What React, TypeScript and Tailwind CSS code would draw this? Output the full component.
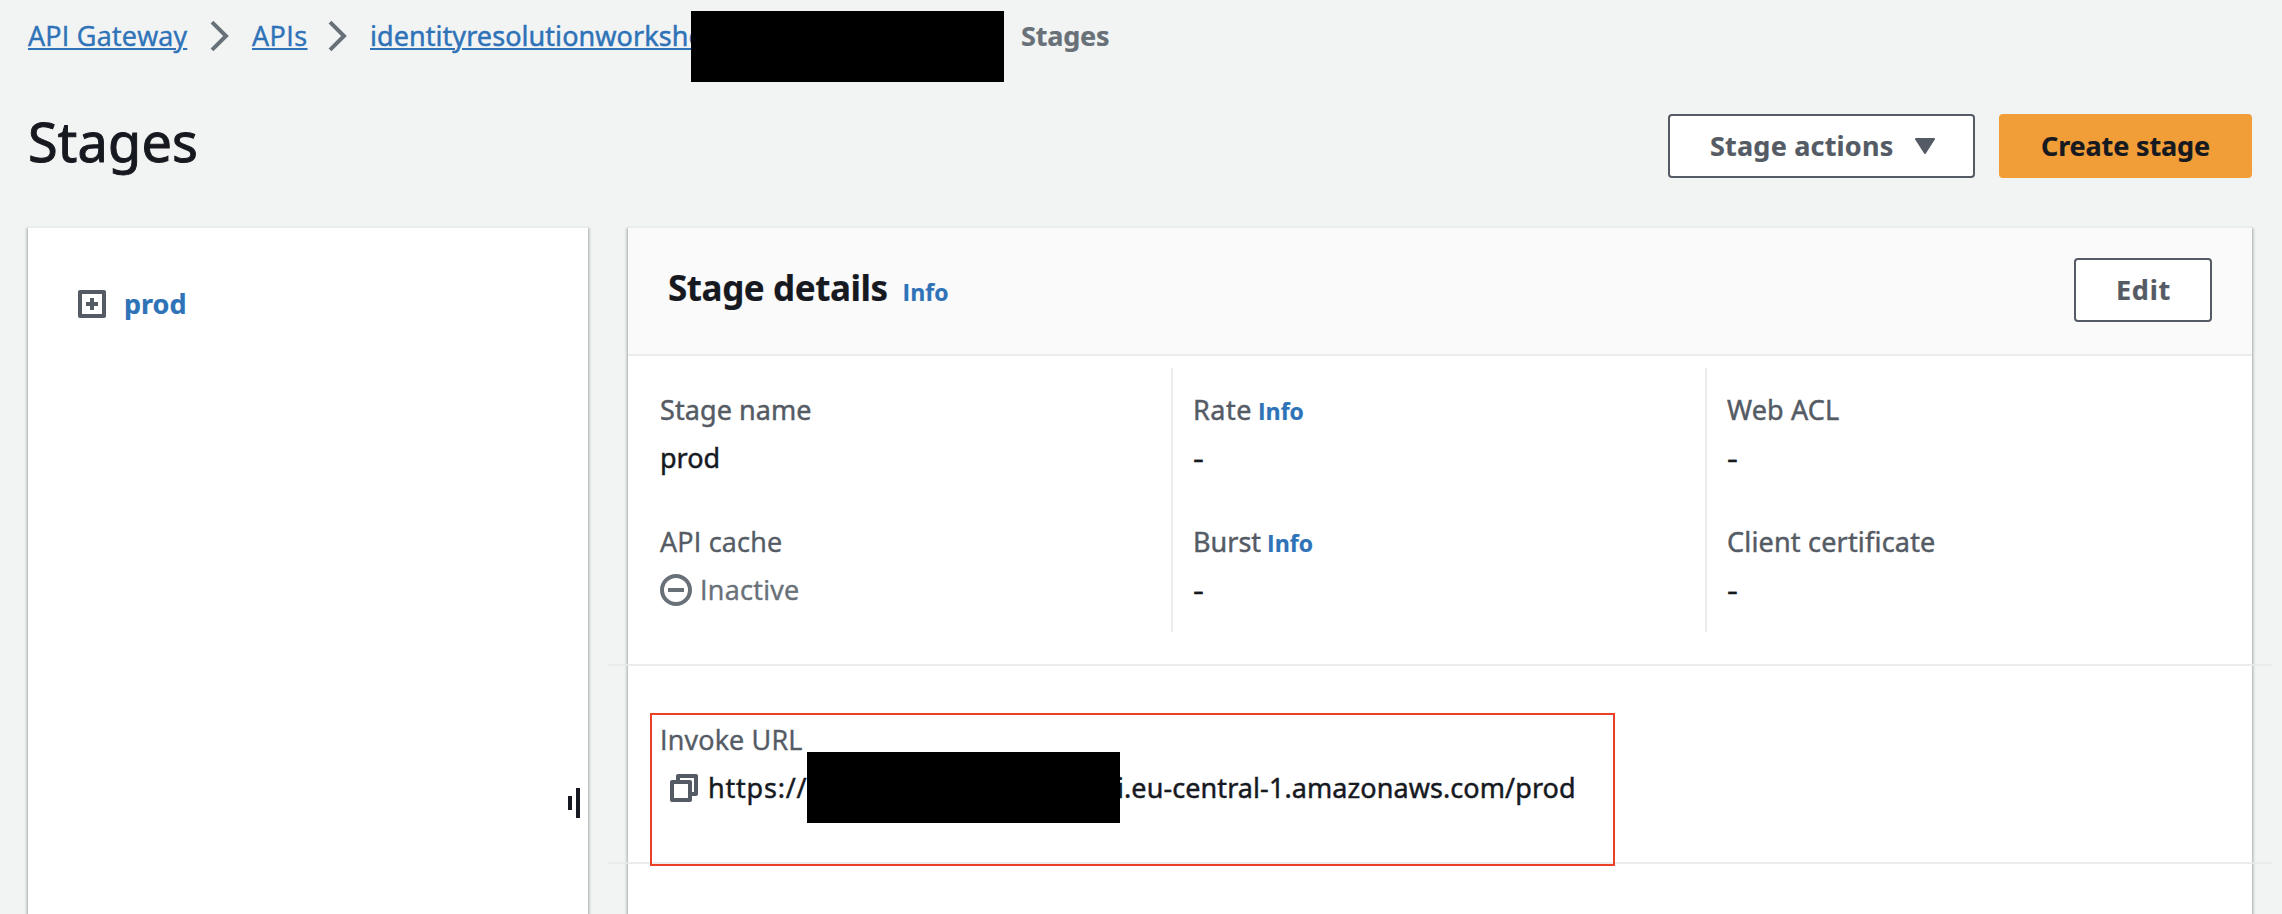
import type { ReactNode } from "react";

const NOTO = "font-['Noto_Sans','Open_Sans',sans-serif]";
const OPEN = "font-['Open_Sans','Noto_Sans',sans-serif]";
const BOLD = "font-bold [-webkit-text-stroke:0.2px]";

function Chevron() {
  return (
    <svg width="20" height="32" viewBox="0 0 20 32" fill="none" stroke="#687078" strokeWidth="4" className="-mt-px shrink-0">
      <path d="M2 2.2 L16 16 L2 29.8" />
    </svg>
  );
}

function Crumb({ className = "", children }: { className?: string; children: ReactNode }) {
  return (
    <a className={`shrink-0 text-[#2e72b8] underline decoration-2 underline-offset-[2px] ${className}`}>{children}</a>
  );
}

function Info({ className = "" }: { className?: string }) {
  return <a className={`${OPEN} ${BOLD} text-[23px] text-[#2e72b8] ${className}`}>Info</a>;
}

function Field({ label, children, className = "" }: { label: ReactNode; children: ReactNode; className?: string }) {
  return (
    <div className={`h-[132px] pt-[18px] leading-[48px] ${className}`}>
      <div className="h-12 text-[#545b64]">{label}</div>
      <div className="h-12">{children}</div>
    </div>
  );
}

function Dash() {
  return <span className="inline-block origin-left scale-x-[1.25]">-</span>;
}

function Redacted({ className = "" }: { className?: string }) {
  return <span className={`relative block h-[71px] w-[313px] shrink-0 bg-black ${className}`} />;
}

export default function App() {
  return (
    <div className={`${NOTO} relative h-[914px] w-[2282px] overflow-hidden bg-[#f2f4f3] text-[27px] leading-10 whitespace-nowrap text-[#16191f] [-webkit-text-stroke:0.45px]`}>
      <nav className="flex h-[114px] items-start pt-4 pl-7">
        <Crumb className={`${OPEN} w-[160px] tracking-[0.23px]`}>API Gateway</Crumb>
        <div className="mt-[5px] ml-[22px] w-[42px] shrink-0"><Chevron /></div>
        <Crumb className={`${OPEN} w-[55px] tracking-[0.45px]`}>APIs</Crumb>
        <div className="mt-[5px] ml-[21px] w-[41px] shrink-0"><Chevron /></div>
        <Crumb className="w-[322px] pl-px tracking-[0.06px]">identityresolutionworksho</Crumb>
        <Redacted className="-mt-[5px]" />
        <span className={`ml-[17px] tracking-[-0.19px] text-[#687078] ${BOLD}`}>Stages</span>
      </nav>

      <header className="flex h-28 items-start justify-between pr-[30px] pl-7">
        <h1 className="-mt-[5px] text-[54px] leading-[64px] tracking-[0.2px] [-webkit-text-stroke:1px]">Stages</h1>
        <div className={`flex gap-6 ${BOLD}`}>
          <button className="flex h-16 w-[307px] items-center rounded border-2 border-[#545b64] bg-white pl-10 text-[#545b64]">
            <span className="w-[205px] text-left tracking-[0.2px]">Stage actions</span>
            <svg width="20" height="18" viewBox="0 0 20 18" fill="#545b64" stroke="#545b64" strokeWidth="2" strokeLinejoin="round">
              <path d="M1 2 H19 L10 16 Z" />
            </svg>
          </button>
          <button className="h-16 w-[253px] rounded bg-[#f19e38] tracking-[-0.14px]">Create stage</button>
        </div>
      </header>

      <main className="flex gap-10 pl-7">
        <aside className="flex h-[720px] w-[560px] flex-col border-t-2 border-[#eaeded] bg-white shadow-[0_2px_2px_0_rgba(0,28,36,0.3),2px_2px_2px_0_rgba(0,28,36,0.15),-2px_2px_2px_0_rgba(0,28,36,0.15)]">
          <div className="flex h-[560px] items-start pt-14 pl-[50px]">
            <svg width="28" height="28" viewBox="0 0 28 28" fill="none" stroke="#545b64" strokeWidth="4" className="mt-[6px]">
              <rect x="2" y="2" width="24" height="24" strokeLinejoin="round" />
              <path d="M14 8 V20 M8 14 H20" />
            </svg>
            <a className={`ml-[18px] text-[#2e72b8] ${BOLD}`}>prod</a>
          </div>
          <div className="flex h-[30px] items-center justify-end gap-1 pr-2">
            <span className="h-[14px] w-1 bg-[#16191f]" />
            <span className="h-[30px] w-1 bg-[#16191f]" />
          </div>
        </aside>

        <section className="h-[720px] w-[1624px] border-t-2 border-[#eaeded] bg-white shadow-[0_2px_2px_0_rgba(0,28,36,0.3),2px_2px_2px_0_rgba(0,28,36,0.15),-2px_2px_2px_0_rgba(0,28,36,0.15)]">
          <div className="flex h-32 items-start justify-between border-b-2 border-[#eaeded] bg-[#fafafa] px-10 pt-[30px]">
            <div className="mt-[6px] flex items-baseline">
              <h2 className={`text-[35px] leading-[48px] tracking-[-0.43px] ${BOLD}`}>Stage details</h2>
              <Info className="ml-[15px]" />
            </div>
            <button className={`h-16 w-[138px] rounded border-2 border-[#545b64] bg-white pl-px tracking-[0.8px] text-[#545b64] ${BOLD}`}>Edit</button>
          </div>

          <div className="grid grid-cols-[543px_534px_547px] pt-3 pb-8">
            <div className="pl-8">
              <Field label={<span className="tracking-[0.08px]">Stage name</span>}>
                <span>prod</span>
              </Field>
              <Field label={<span className={`${OPEN} tracking-[0.21px]`}>API cache</span>}>
                <div className="flex items-center text-[#687078]">
                  <svg width="32" height="32" viewBox="0 0 32 32" fill="none" stroke="#687078" strokeWidth="4">
                    <circle cx="16" cy="16" r="14" />
                    <path d="M8 16 H24" />
                  </svg>
                  <span className={`${OPEN} ml-2 tracking-[0.3px]`}>Inactive</span>
                </div>
              </Field>
            </div>
            <div className="border-l-2 border-[#eaeded] pl-[20px]">
              <Field label={<><span className="tracking-[0.5px]">Rate</span><Info className="ml-[6px]" /></>}><Dash /></Field>
              <Field label={<>Burst<Info className="ml-[6px]" /></>}><Dash /></Field>
            </div>
            <div className="border-l-2 border-[#eaeded] pl-[20px]">
              <Field label={<span className="tracking-[0.13px]">Web ACL</span>}><Dash /></Field>
              <Field label={<span className="tracking-[0.19px]">Client certificate</span>}><Dash /></Field>
            </div>
          </div>

          <div className="-mx-5 h-[200px] border-y-2 border-[#e6e9e9]/80">
            <div className="relative z-10 mt-[47px] ml-[42px] h-[153px] w-[965px] border-2 border-[#eb4027] pt-[5px] pl-2">
              <div className={`${OPEN} leading-[40px] tracking-[0.2px] text-[#545b64]`}>Invoke URL</div>
              <div className="-mt-[8px] flex h-[71px] items-center">
                <svg width="28" height="28" viewBox="0 0 28 28" fill="none" stroke="#545b64" strokeWidth="4" strokeLinejoin="round" className="ml-[10px] shrink-0">
                  <path d="M8 8 V2 H26 V20 H20" />
                  <rect x="2" y="8" width="18" height="18" />
                </svg>
                <span className="ml-[10px] w-[99px] tracking-[0.8px]">https://</span>
                <Redacted />
                <span className="-ml-[3px] tracking-[0.08px]">i.eu-central-1.amazonaws.com/prod</span>
              </div>
            </div>
          </div>
        </section>
      </main>
    </div>
  );
}
